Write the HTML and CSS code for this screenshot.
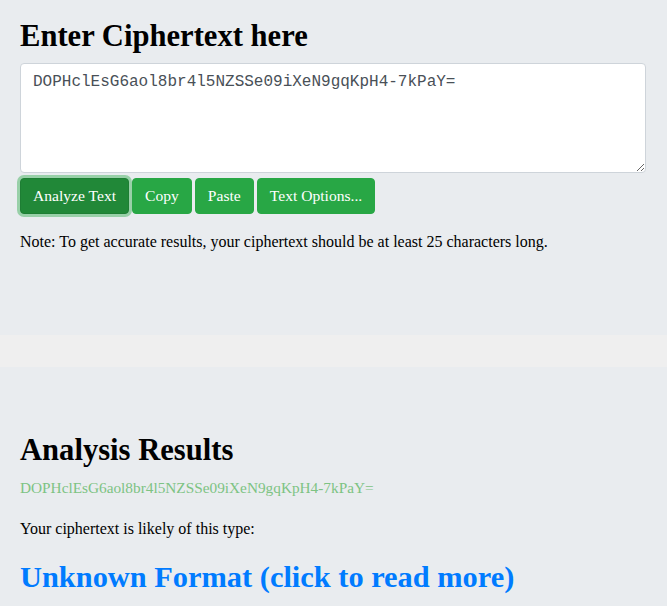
FILE: index.html
```html
<!DOCTYPE html>
<html>
<head>
<meta charset="utf-8">
<link rel="stylesheet" href="styles.css">
</head>
<body>
<section class="panel top">
  <h1 class="title">Enter Ciphertext here</h1>
  <textarea class="cipher-input" spellcheck="false">DOPHclEsG6aol8br4l5NZSSe09iXeN9gqKpH4-7kPaY=</textarea>
  <div class="actions">
    <button class="btn btn-active">Analyze Text</button>
    <button class="btn">Copy</button>
    <button class="btn">Paste</button>
    <button class="btn">Text Options...</button>
  </div>
  <p class="note">Note: To get accurate results, your ciphertext should be at least 25 characters long.</p>
</section>
<div class="band"></div>
<section class="panel results">
  <h1 class="title">Analysis Results</h1>
  <p class="echo">DOPHclEsG6aol8br4l5NZSSe09iXeN9gqKpH4-7kPaY=</p>
  <p class="likely">Your ciphertext is likely of this type:</p>
  <a class="format" href="#">Unknown Format (click to read more)</a>
</section>
</body>
</html>
```
FILE: styles.css
```css
html, body {
  margin: 0;
  padding: 0;
  background: #e9ecef;
  font-family: "Liberation Serif", "Times New Roman", serif;
  color: #212529;
}
.panel {
  background: #e9ecef;
  padding: 0 21px 0 20px;
}
.top {
  height: 335px;
  padding-top: 18px;
  box-sizing: border-box;
}
.title {
  margin: 0;
  font-size: 30.6px;
  line-height: 36px;
  font-weight: 700;
  color: #000;
}
.cipher-input {
  display: block;
  box-sizing: border-box;
  width: 100%;
  height: 110px;
  margin-top: 9px;
  padding: 6px 12px;
  border: 1px solid #ced4da;
  border-radius: 4px;
  background: #fff;
  font-family: "Liberation Mono", "Courier New", monospace;
  font-size: 16px;
  line-height: 24px;
  color: #495057;
  resize: vertical;
  outline: none;
}
.actions {
  display: flex;
  gap: 3px;
  margin-top: 5px;
}
.btn {
  box-sizing: border-box;
  height: 36px;
  padding: 0 12px;
  border: 1px solid #28a745;
  border-radius: 4px;
  background: #28a745;
  color: #fff;
  font-family: "Liberation Serif", "Times New Roman", serif;
  font-size: 15.6px;
}
.btn-active {
  background: #218838;
  border-color: #1e7e34;
  box-shadow: 0 0 0 3px rgba(72, 180, 97, 0.5);
}
.note {
  margin: 17px 0 0;
  font-size: 16px;
  line-height: 22px;
  color: #000;
}
.band {
  height: 32px;
  background: #efefef;
}
.results {
  padding-top: 65px;
}
.echo {
  margin: 8px 0 0;
  font-size: 15.3px;
  line-height: 24px;
  color: #7dc383;
}
.likely {
  margin: 17px 0 0;
  font-size: 16px;
  line-height: 24px;
  color: #000;
}
.format {
  display: block;
  margin-top: 18px;
  font-size: 30.4px;
  line-height: 36px;
  font-weight: 700;
  color: #007bff;
  text-decoration: none;
}
```
